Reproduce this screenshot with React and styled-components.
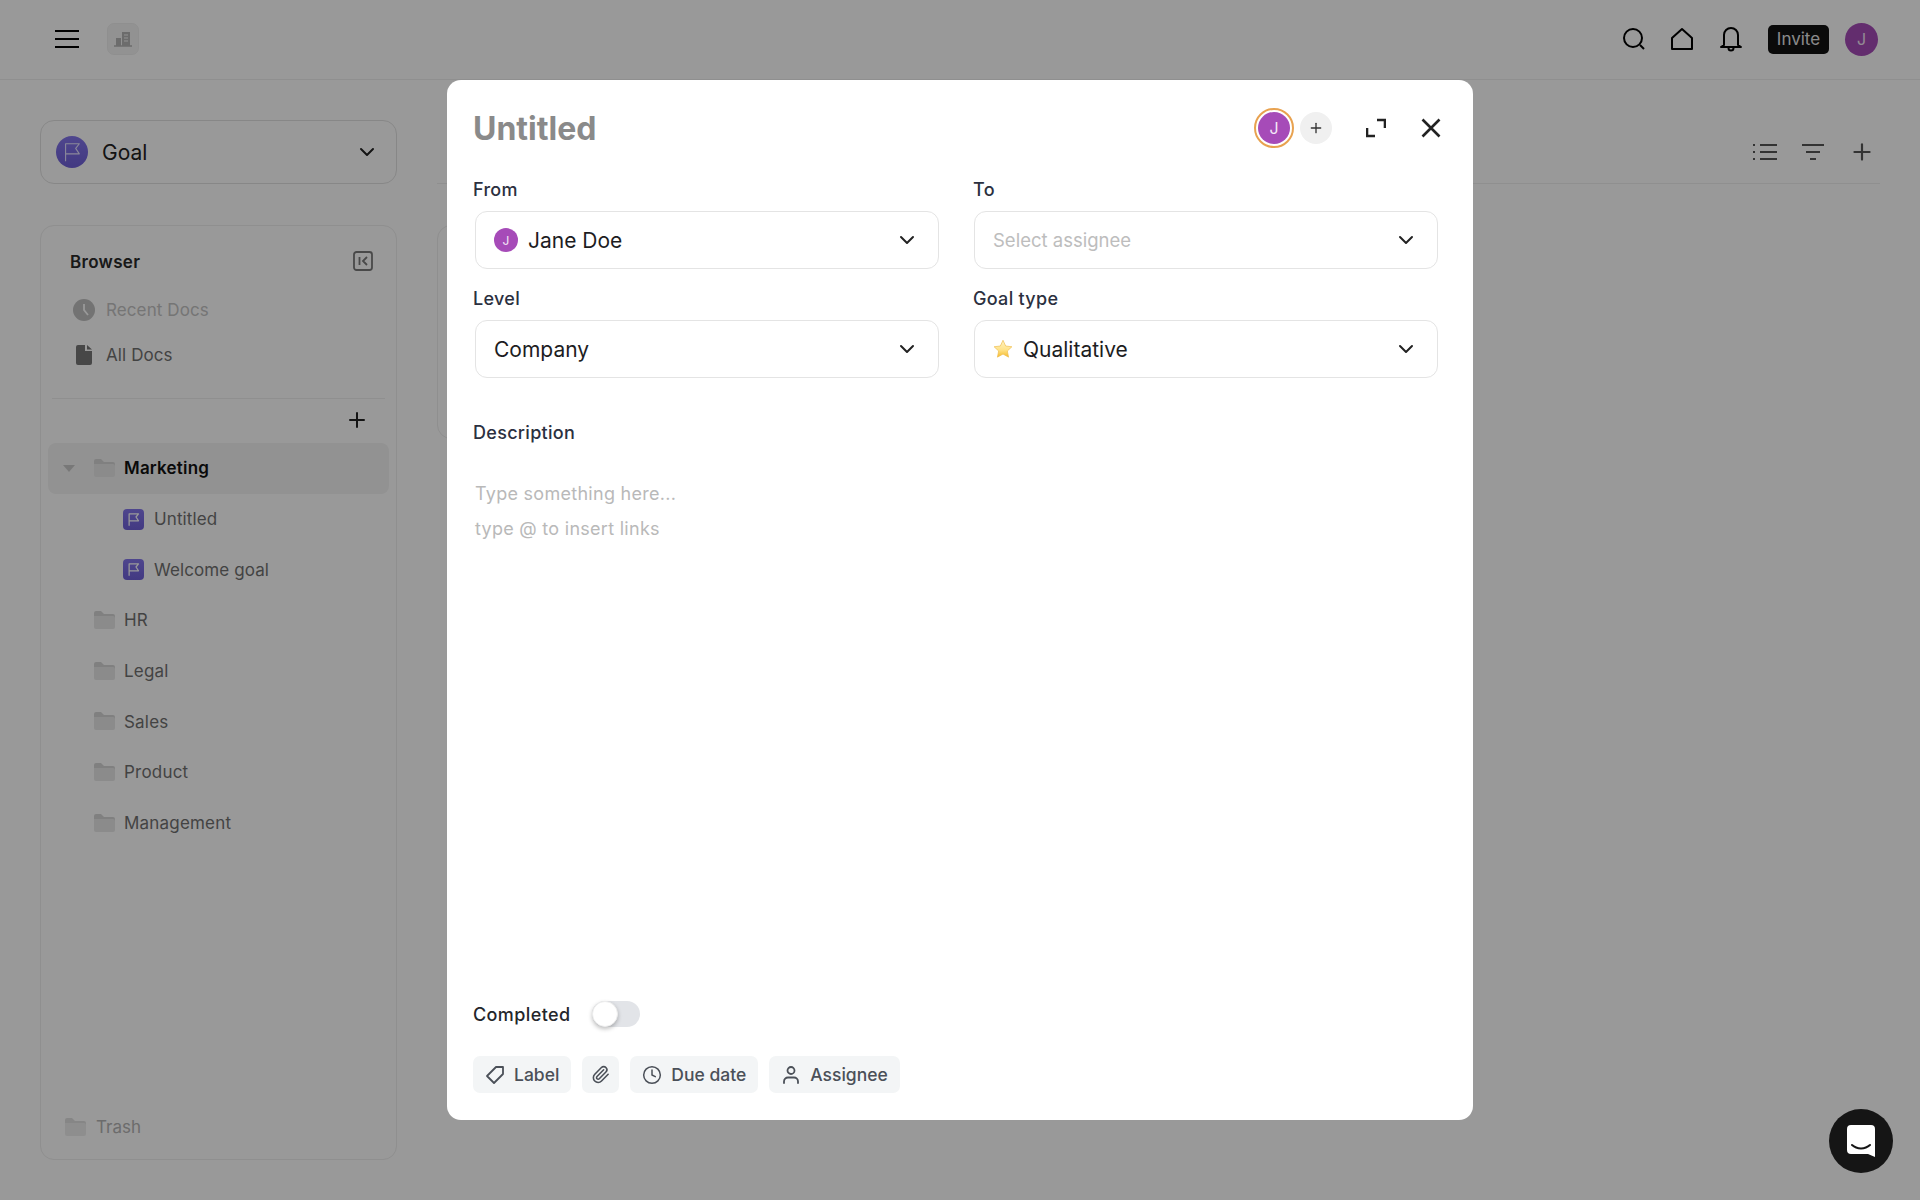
import React from 'react';
import styled, { createGlobalStyle } from 'styled-components';
import { ChevronDown, Clock, Paperclip, Plus } from 'lucide-react';

const GlobalStyle = createGlobalStyle`
  html, body {
    margin: 0;
    height: 100%;
    background: #fff;
    font-family: Inter, "Noto Sans", sans-serif;
    color: #111;
  }
  * { box-sizing: border-box; }
`;

const Page = styled.div`
  display: flex;
  flex-direction: column;
  height: 1200px;
  overflow: hidden;
`;

const TopBar = styled.header`
  display: flex;
  align-items: center;
  justify-content: space-between;
  height: 80px;
  padding: 0 42px 1px 55px;
  border-bottom: 1px solid #efefef;
  flex: none;
`;

const TopLeft = styled.div`
  display: flex;
  align-items: center;
  gap: 28px;
`;

const TopRight = styled.div`
  display: flex;
  align-items: center;
`;

const OrgTile = styled.div`
  display: flex;
  align-items: center;
  justify-content: center;
  width: 32px;
  height: 32px;
  border-radius: 7px;
  background: #f4f4f4;
  border: 1px solid #efefef;
`;

const TopIcon = styled.span`
  display: flex;
  width: 26px;
  justify-content: center;
  margin-right: ${(p) => p.$gap || 23}px;
`;

const InviteButton = styled.div`
  width: 61px;
  height: 29px;
  line-height: 29px;
  text-align: center;
  border-radius: 5px;
  background: #111;
  color: #e6e6e6;
  font-size: 17px;
  margin-right: 16px;
`;

const Avatar = styled.div`
  display: flex;
  align-items: center;
  justify-content: center;
  width: ${(p) => p.$size}px;
  height: ${(p) => p.$size}px;
  border-radius: 50%;
  background: #a64bb8;
  color: #f3e6f6;
  font-size: ${(p) => p.$font}px;
  flex: none;
`;

const GoalBadge = styled(Avatar)`
  background: linear-gradient(#8375ec, #6f60d8);
`;

const Body = styled.div`
  display: flex;
  flex: 1;
  min-height: 0;
  padding: 40px 40px 40px;
  gap: 40px;
`;

const Side = styled.aside`
  display: flex;
  flex-direction: column;
  gap: 41px;
  width: 357px;
  flex: none;
`;

const ViewSelect = styled.div`
  display: flex;
  align-items: center;
  height: 64px;
  padding: 0 17px 0 15px;
  border: 1.5px solid #e2e2e2;
  border-radius: 14px;
  font-size: 21px;
  color: #222;
`;

const ViewName = styled.span`
  flex: 1;
  margin-left: 14px;
`;

const BrowserCard = styled.div`
  display: flex;
  flex-direction: column;
  flex: 1;
  border: 1.5px solid #eee;
  border-radius: 14px;
  padding: 0 7px 0 7px;
`;

const BrowserHead = styled.div`
  display: flex;
  align-items: center;
  justify-content: space-between;
  height: 36px;
  margin-top: 18px;
  padding: 0 16px 0 22px;
  font-size: 17px;
  font-weight: 600;
  letter-spacing: 0.3px;
  color: #2a2a2a;
`;

const CollapseBox = styled.span`
  display: flex;
  margin-bottom: 2px;
`;

const NavList = styled.div`
  margin-top: 7px;
`;

const NavItem = styled.div`
  display: flex;
  align-items: center;
  height: 45px;
  padding-left: 24px;
  gap: 10px;
  font-size: 17px;
  letter-spacing: 0.1px;
  color: ${(p) => p.$color};
`;

const NavIconBox = styled.span`
  display: flex;
  justify-content: center;
  width: 24px;
`;

const Divider = styled.div`
  height: 1px;
  margin: 21px 4px 0;
  background: #eee;
`;

const AddRow = styled.div`
  display: flex;
  justify-content: flex-end;
  height: 44px;
  padding: 9px 20px 0 0;
`;

const FolderRow = styled.div`
  display: flex;
  align-items: center;
  height: 50.7px;
  padding-left: 15px;
  border-radius: 8px;
  font-size: 17px;
  letter-spacing: 0.2px;
  color: ${(p) => (p.$active ? '#111' : '#717171')};
  font-weight: ${(p) => (p.$active ? 600 : 400)};
  background: ${(p) => (p.$active ? '#f4f4f4' : 'transparent')};
`;

const Caret = styled.span`
  width: 0;
  height: 0;
  margin-right: 19px;
  border-left: 6px solid transparent;
  border-right: 6px solid transparent;
  border-top: 7px solid #c8c8c8;
`;

const CaretGap = styled.span`
  width: 12px;
  margin-right: 19px;
`;

const FolderText = styled.span`
  margin-left: 9px;
`;

const DocRow = styled.div`
  display: flex;
  align-items: center;
  height: 50.7px;
  padding-left: 75px;
  gap: 10px;
  font-size: 17px;
  letter-spacing: 0.1px;
  color: #717171;
`;

const DocBadge = styled.span`
  display: flex;
  align-items: center;
  justify-content: center;
  width: 21px;
  height: 21px;
  border-radius: 4px;
  background: linear-gradient(#8375ec, #6f60d8);
`;

const TrashRow = styled.div`
  display: flex;
  align-items: center;
  gap: 10px;
  margin-top: auto;
  height: 30px;
  margin-bottom: 17px;
  padding-left: 17px;
  font-size: 17px;
  color: #b4b4b4;
`;

const MainArea = styled.main`
  display: flex;
  flex-direction: column;
  flex: 1;
  gap: 41px;
`;

const MainHead = styled.div`
  display: flex;
  align-items: center;
  justify-content: flex-end;
  height: 64px;
  padding-right: 5px;
  gap: 24px;
  border-bottom: 1px solid #efefef;
`;

const MainCard = styled.div`
  width: 400px;
  height: 214px;
  border: 1.5px solid #eee;
  border-radius: 14px;
`;

const Overlay = styled.div`
  position: fixed;
  inset: 0;
  display: flex;
  align-items: center;
  justify-content: center;
  background: rgba(0, 0, 0, 0.4);
`;

const Modal = styled.div`
  display: flex;
  flex-direction: column;
  width: 1026px;
  height: 1040px;
  padding: 0 33px 27px 26px;
  border-radius: 14px;
  background: #fff;
`;

const ModalHead = styled.div`
  display: flex;
  align-items: center;
  height: 96px;
  flex: none;
`;

const Title = styled.div`
  flex: 1;
  font-size: 32px;
  font-weight: 700;
  color: #8a8a8a;
`;

const RingAvatar = styled.div`
  display: flex;
  align-items: center;
  justify-content: center;
  width: 40px;
  height: 40px;
  border-radius: 50%;
  border: 2px solid #e8a250;
  padding: 1px;
  margin-right: 6px;
`;

const AddPerson = styled.div`
  display: flex;
  align-items: center;
  justify-content: center;
  width: 32px;
  height: 32px;
  border-radius: 50%;
  background: #f0f0f0;
  margin-right: 34px;
`;

const HeadButton = styled.span`
  display: flex;
  margin-right: ${(p) => p.$gap}px;
`;

const FieldGrid = styled.div`
  display: grid;
  grid-template-columns: 468px 468px;
  column-gap: 31px;
  row-gap: 18px;
  margin-top: 2px;
`;

const FieldLabel = styled.div`
  height: 24px;
  line-height: 24px;
  margin-bottom: 9px;
  font-size: 18px;
  font-weight: 450;
  letter-spacing: 0.3px;
  color: #2b3040;
`;

const ToLabel = styled(FieldLabel)`
  margin-left: 1px;
`;

const SelectBox = styled.div`
  display: flex;
  align-items: center;
  gap: 10px;
  height: 58px;
  margin: 0 2px;
  padding: 0 19px 0 18px;
  border: 1.5px solid #e4e4e4;
  border-radius: 12px;
  font-size: 21px;
  color: ${(p) => (p.$placeholder ? '#bdbdbd' : '#1d1d1f')};
`;

const SelectText = styled.span`
  flex: 1;
  font-size: ${(p) => (p.$placeholder ? 18.5 : 21)}px;
`;

const DescriptionLabel = styled(FieldLabel)`
  margin-top: 43px;
  margin-bottom: 0;
`;

const Placeholder = styled.div`
  margin-top: 31px;
  padding-left: 2px;
  font-size: 18px;
  letter-spacing: 0.28px;
  line-height: 35px;
  color: #b9b9b9;
`;

const Spacer = styled.div`
  flex: 1;
`;

const CompletedRow = styled.div`
  display: flex;
  align-items: center;
  gap: 21px;
  margin-bottom: 29px;
  font-size: 18px;
  font-weight: 450;
  letter-spacing: 0.4px;
  color: #24262b;
`;

const Toggle = styled.div`
  position: relative;
  width: 48px;
  height: 26px;
  border-radius: 13px;
  background: #e2e4e8;
`;

const Knob = styled.span`
  position: absolute;
  left: 0;
  top: 0;
  width: 26px;
  height: 26px;
  border-radius: 50%;
  background: #fff;
  border: 1px solid #eee;
  box-shadow: 0 2px 4px rgba(0, 0, 0, 0.25);
`;

const ChipRow = styled.div`
  display: flex;
  gap: 11px;
`;

const Chip = styled.div`
  display: flex;
  align-items: center;
  gap: ${(p) => p.$gap || 9}px;
  height: 37px;
  padding: 0 ${(p) => p.$pad || 12}px;
  border-radius: 7px;
  background: #f3f5f6;
  font-size: 17.5px;
  font-weight: 500;
  color: #4b5058;
`;

const ChatBubble = styled.div`
  position: fixed;
  left: 1829px;
  top: 1109px;
  display: flex;
  align-items: center;
  justify-content: center;
  width: 64px;
  height: 64px;
  border-radius: 50%;
  background: #151515;
`;

const FlagGlyph = ({ size, stroke = '#fff', width = 1.6 }) => (
  <svg width={size} height={size} viewBox="0 0 24 24" fill="none" stroke={stroke} strokeWidth={width}>
    <path d="M5 22V3h15l-4 5 4 6H5" strokeLinejoin="round" />
  </svg>
);

const Folder = ({ light }) => (
  <svg width="21" height="21" viewBox="0 0 21 21" style={{ opacity: light ? 0.75 : 1, flex: 'none' }}>
    <path d="M0 3a2 2 0 0 1 2-2h5l3 3h9a2 2 0 0 1 2 2v2H0z" fill="#d6d6d6" />
    <path d="M0 6h19a2 2 0 0 1 2 2v9a2 2 0 0 1-2 2H2a2 2 0 0 1-2-2z" fill="#e8e8e8" />
  </svg>
);

const Hamburger = () => (
  <svg width="24" height="20" viewBox="0 0 24 20" stroke="#000" strokeWidth="2.2">
    <path d="M0 2h24M0 10h24M0 18h24" />
  </svg>
);

const OrgIcon = () => (
  <svg width="18" height="16" viewBox="0 0 18 16">
    <path d="M2 7h5v8H2zM8 1h8v14H8z" fill="#b5b5b5" />
    <path d="M10 4h4M10 7h4M10 10h4" stroke="#f4f4f4" strokeWidth="1" />
    <path d="M0 15h18" stroke="#b5b5b5" strokeWidth="1.5" />
  </svg>
);

const SearchIcon = () => (
  <svg width="24" height="24" viewBox="0 0 24 24" fill="none" stroke="#000" strokeWidth="2">
    <circle cx="11" cy="11" r="9" />
    <path d="M18 18l4 4" />
  </svg>
);

const HomeIcon = () => (
  <svg width="24" height="24" viewBox="0 0 24 24" fill="none" stroke="#000" strokeWidth="2" strokeLinejoin="round">
    <path d="M12 2l10 9v11H2V11z" />
  </svg>
);

const BellIcon = () => (
  <svg width="24" height="26" viewBox="0 0 24 26" fill="none" stroke="#000" strokeWidth="2" strokeLinejoin="round">
    <path d="M5 19V9a7 7 0 0 1 14 0v10l3 2H2z" />
    <path d="M9.5 22a2.5 2.5 0 0 0 5 0" />
  </svg>
);

const CollapseIcon = () => (
  <svg width="20" height="20" viewBox="0 0 20 20" fill="none" stroke="#7a7a7a" strokeWidth="1.8">
    <rect x="1" y="1" width="18" height="18" rx="2.5" />
    <path d="M6.5 6v8M14 6l-4 4 4 4" />
  </svg>
);

const RecentIcon = () => (
  <svg width="22" height="22" viewBox="0 0 22 22">
    <circle cx="11" cy="11" r="11" fill="#c0c0c0" />
    <path d="M11 5v6l4 5" fill="none" stroke="#fff" strokeWidth="1.8" />
  </svg>
);

const FileIcon = () => (
  <svg width="16" height="20" viewBox="0 0 16 20">
    <path d="M2 0h7v6h7v12a2 2 0 0 1-2 2H2a2 2 0 0 1-2-2V2a2 2 0 0 1 2-2zM11 0l5 4.5h-5z" fill="#777" />
  </svg>
);

const ListIcon = () => (
  <svg width="24" height="18" viewBox="0 0 24 18" stroke="#555" strokeWidth="2" fill="none">
    <path d="M7 2h17M7 9h17M7 16h17M0 2h2M0 9h2M0 16h2" />
  </svg>
);

const FilterIcon = () => (
  <svg width="24" height="18" viewBox="0 0 24 18" stroke="#555" strokeWidth="2" fill="none">
    <path d="M1 2h22M5 9h14M9 16h6" />
  </svg>
);

const ExpandIcon = () => (
  <svg width="20" height="20" viewBox="0 0 20 20" fill="none" stroke="#222" strokeWidth="2.6">
    <path d="M11 2h8v8M1 10v8h8" />
  </svg>
);

const CloseIcon = () => (
  <svg width="20" height="20" viewBox="0 0 20 20" fill="none" stroke="#222" strokeWidth="2.6">
    <path d="M1.5 1.5l17 17M18.5 1.5l-17 17" />
  </svg>
);

const TagIcon = () => (
  <svg width="20" height="20" viewBox="0 0 20 20" fill="none" stroke="#4b5058" strokeWidth="1.8" strokeLinejoin="round">
    <path d="M11 2h7v7l-9 9-7-7z" />
  </svg>
);

const PersonIcon = () => (
  <svg width="20" height="20" viewBox="0 0 20 20" fill="none" stroke="#4b5058" strokeWidth="1.8" strokeLinecap="round">
    <circle cx="10" cy="5.5" r="3.5" />
    <path d="M3 18v-1.5a4 4 0 0 1 4-4h6a4 4 0 0 1 4 4V18" />
  </svg>
);

const StarIcon = () => (
  <svg width="20" height="20" viewBox="0 0 24 24">
    <defs>
      <linearGradient id="star" x1="0" y1="0" x2="0" y2="1">
        <stop offset="0" stopColor="#fff3c4" />
        <stop offset="0.55" stopColor="#ffe38a" />
        <stop offset="1" stopColor="#f6bd2f" />
      </linearGradient>
    </defs>
    <path d="M12 1.5l3.2 6.9 7.5.9-5.5 5.1 1.5 7.4L12 18.1l-6.7 3.7 1.5-7.4L1.3 9.3l7.5-.9z" fill="url(#star)" stroke="#eebb4a" strokeWidth="0.8" />
  </svg>
);

const ChatIcon = () => (
  <svg width="28" height="32" viewBox="0 0 28 32">
    <path d="M4 0h20a4 4 0 0 1 4 4v28l-7-3H4a4 4 0 0 1-4-4V4a4 4 0 0 1 4-4z" fill="#fff" />
    <path d="M5 20c5 4.5 13 4.5 18 0" fill="none" stroke="#151515" strokeWidth="2" strokeLinecap="round" />
  </svg>
);

const folders = ['HR', 'Legal', 'Sales', 'Product', 'Management'];

const Select = ({ children, placeholder }) => (
  <SelectBox $placeholder={placeholder}>
    {children}
    <ChevronDown size={24} color="#222" strokeWidth={2} />
  </SelectBox>
);

export default function App() {
  return (
    <Page>
      <GlobalStyle />
      <TopBar>
        <TopLeft>
          <Hamburger />
          <OrgTile>
            <OrgIcon />
          </OrgTile>
        </TopLeft>
        <TopRight>
          <TopIcon $gap={22}><SearchIcon /></TopIcon>
          <TopIcon $gap={23}><HomeIcon /></TopIcon>
          <TopIcon $gap={24}><BellIcon /></TopIcon>
          <InviteButton>Invite</InviteButton>
          <Avatar $size={33} $font={16}>J</Avatar>
        </TopRight>
      </TopBar>

      <Body>
        <Side>
          <ViewSelect>
            <GoalBadge $size={32} $font={0}>
              <FlagGlyph size={22} stroke="#e6e2ff" width={1.2} />
            </GoalBadge>
            <ViewName>Goal</ViewName>
            <ChevronDown size={24} color="#222" strokeWidth={2} />
          </ViewSelect>
          <BrowserCard>
            <BrowserHead>
              Browser
              <CollapseBox><CollapseIcon /></CollapseBox>
            </BrowserHead>
            <NavList>
              <NavItem $color="#c4c4c4">
                <NavIconBox><RecentIcon /></NavIconBox>
                Recent Docs
              </NavItem>
              <NavItem $color="#717171">
                <NavIconBox><FileIcon /></NavIconBox>
                All Docs
              </NavItem>
            </NavList>
            <Divider />
            <AddRow>
              <Plus size={24} color="#222" strokeWidth={2} />
            </AddRow>
            <FolderRow $active>
              <Caret />
              <Folder />
              <FolderText>Marketing</FolderText>
            </FolderRow>
            <DocRow>
              <DocBadge><FlagGlyph size={15} width={2} /></DocBadge>
              Untitled
            </DocRow>
            <DocRow>
              <DocBadge><FlagGlyph size={15} width={2} /></DocBadge>
              Welcome goal
            </DocRow>
            {folders.map((name) => (
              <FolderRow key={name}>
                <CaretGap />
                <Folder />
                <FolderText>{name}</FolderText>
              </FolderRow>
            ))}
            <TrashRow>
              <Folder light />
              Trash
            </TrashRow>
          </BrowserCard>
        </Side>
        <MainArea>
          <MainHead>
            <ListIcon />
            <FilterIcon />
            <Plus size={26} color="#555" strokeWidth={2} />
          </MainHead>
          <MainCard />
        </MainArea>
      </Body>

      <Overlay>
        <Modal>
          <ModalHead>
            <Title>Untitled</Title>
            <RingAvatar>
              <Avatar $size={32} $font={16}>J</Avatar>
            </RingAvatar>
            <AddPerson>
              <Plus size={16} color="#333" strokeWidth={2} />
            </AddPerson>
            <HeadButton $gap={35}><ExpandIcon /></HeadButton>
            <HeadButton $gap={-1}><CloseIcon /></HeadButton>
          </ModalHead>

          <FieldGrid>
            <div>
              <FieldLabel>From</FieldLabel>
              <Select>
                <Avatar $size={24} $font={12}>J</Avatar>
                <SelectText>Jane Doe</SelectText>
              </Select>
            </div>
            <div>
              <ToLabel>To</ToLabel>
              <Select placeholder>
                <SelectText $placeholder>Select assignee</SelectText>
              </Select>
            </div>
            <div>
              <FieldLabel>Level</FieldLabel>
              <Select>
                <SelectText>Company</SelectText>
              </Select>
            </div>
            <div>
              <ToLabel>Goal type</ToLabel>
              <Select>
                <StarIcon />
                <SelectText>Qualitative</SelectText>
              </Select>
            </div>
          </FieldGrid>

          <DescriptionLabel>Description</DescriptionLabel>
          <Placeholder>
            Type something here...
            <br />
            type @ to insert links
          </Placeholder>
          <Spacer />

          <CompletedRow>
            Completed
            <Toggle><Knob /></Toggle>
          </CompletedRow>
          <ChipRow>
            <Chip><TagIcon />Label</Chip>
            <Chip $pad={9}><Paperclip size={19} color="#4b5058" strokeWidth={2} /></Chip>
            <Chip><Clock size={20} color="#4b5058" strokeWidth={1.8} />Due date</Chip>
            <Chip><PersonIcon />Assignee</Chip>
          </ChipRow>
        </Modal>
      </Overlay>

      <ChatBubble>
        <ChatIcon />
      </ChatBubble>
    </Page>
  );
}
